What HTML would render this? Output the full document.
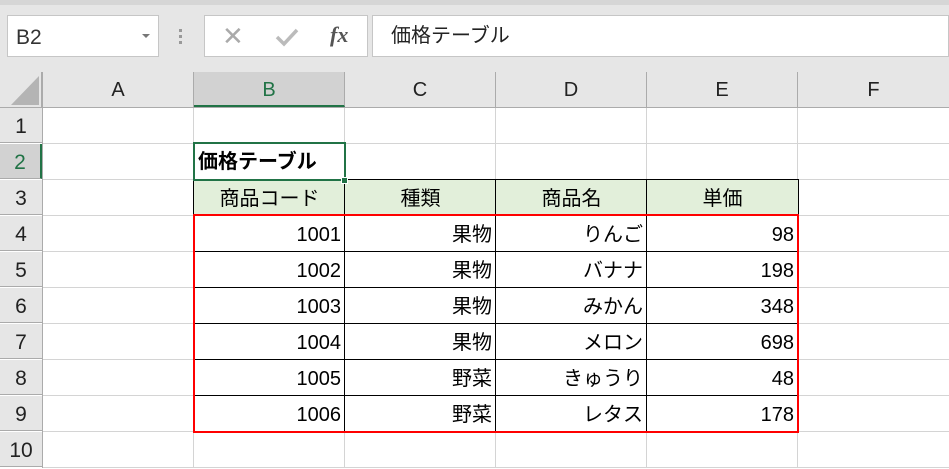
<!DOCTYPE html><html><head><meta charset="utf-8"><style>
*{margin:0;padding:0;box-sizing:border-box}
body{width:949px;height:468px;overflow:hidden;background:#fff;position:relative;font-family:"Liberation Sans","Noto Sans CJK JP",sans-serif}
.a{position:absolute}
.vl{position:absolute;width:1px;background:#d4d4d4;top:108px;height:360px}
.hl{position:absolute;height:1px;background:#d4d4d4;left:43px;width:906px}
.rh{position:absolute;left:0;width:42px;height:35px;background:#e6e6e6;font-size:21px;color:#222;text-align:center;line-height:37px;border-bottom:1px solid #ababab}
.ch{position:absolute;top:72px;height:35px;background:#e6e6e6;font-size:20px;color:#222;text-align:center;line-height:36px;border-right:1px solid #ababab}
.c{position:absolute;font-size:20px;line-height:38px;height:36px;color:#000;padding:0 3px;white-space:nowrap}
.r{text-align:right}.m{text-align:center}
</style></head><body>
<div class="a" style="left:0;top:0;width:949px;height:72px;background:#e6e6e6"></div>
<div class="a" style="left:0;top:0;width:949px;height:5px;background:#d6d6d6"></div>
<div class="a" style="left:7px;top:15px;width:152px;height:42px;background:#fff;border:1px solid #c6c6c6;font-size:21px;line-height:44px;padding-left:8px;color:#333">B2</div>
<div class="a" style="left:142px;top:34px;width:0;height:0;border-left:4px solid transparent;border-right:4px solid transparent;border-top:4px solid #777"></div>
<div class="a" style="left:179px;top:29px;width:3px;height:3px;background:#999;box-shadow:0 6px 0 #999,0 12px 0 #999"></div>
<div class="a" style="left:204px;top:15px;width:164px;height:42px;background:#fff;border:1px solid #c6c6c6"></div>
<div class="a" style="left:222px;top:23px;font-size:26px;color:#aaa;line-height:26px">✕</div>
<svg class="a" style="left:275px;top:27px" width="24" height="20"><path d="M2 10 L9 17 L22 3" stroke="#bbb" stroke-width="3.5" fill="none"/></svg>
<div class="a" style="left:330px;top:22px;font-size:22px;font-family:'Liberation Serif',serif;font-style:italic;font-weight:bold;color:#555">fx</div>
<div class="a" style="left:372px;top:15px;width:577px;height:42px;background:#fff;border:1px solid #c6c6c6;font-size:20px;line-height:40px;padding-left:18px;color:#222">価格テーブル</div>
<div class="a" style="left:0;top:72px;width:42px;height:36px;background:#e6e6e6;border-right:1px solid #ababab;border-bottom:1px solid #ababab"></div>
<svg class="a" style="left:10px;top:76px" width="30" height="30"><path d="M29 0 L29 29 L1 29 Z" fill="#b4b4b4"/></svg>
<div class="a" style="left:43px;top:107px;width:906px;height:1px;background:#ababab"></div>
<div class="ch" style="left:43px;width:151px">A</div>
<div class="ch" style="left:194px;width:151px;background:#d2d2d2;color:#217346;border-bottom:2px solid #217346">B</div>
<div class="ch" style="left:345px;width:151px">C</div>
<div class="ch" style="left:496px;width:151px">D</div>
<div class="ch" style="left:647px;width:151px">E</div>
<div class="ch" style="left:798px;width:151px;border-right:none">F</div>
<div class="a" style="left:42px;top:72px;width:1px;height:396px;background:#ababab"></div>
<div class="rh" style="top:108px">1</div>
<div class="rh" style="top:144px;background:#d2d2d2;color:#217346;border-right:2px solid #217346">2</div>
<div class="rh" style="top:180px">3</div><div class="rh" style="top:216px">4</div><div class="rh" style="top:252px">5</div><div class="rh" style="top:288px">6</div><div class="rh" style="top:324px">7</div><div class="rh" style="top:360px">8</div><div class="rh" style="top:396px">9</div><div class="rh" style="top:432px">10</div>
<div class="vl" style="left:193px"></div><div class="vl" style="left:344px"></div><div class="vl" style="left:495px"></div><div class="vl" style="left:646px"></div><div class="vl" style="left:797px"></div>
<div class="hl" style="top:143px"></div><div class="hl" style="top:179px"></div><div class="hl" style="top:215px"></div><div class="hl" style="top:251px"></div><div class="hl" style="top:287px"></div><div class="hl" style="top:323px"></div><div class="hl" style="top:359px"></div><div class="hl" style="top:395px"></div><div class="hl" style="top:431px"></div><div class="hl" style="top:467px"></div>
<div class="a" style="left:194px;top:180px;width:604px;height:36px;background:#e2efda"></div>
<div class="a" style="left:193px;top:179px;width:606px;height:253px;border:1px solid #000"></div>
<div class="a" style="left:344px;top:179px;width:1px;height:253px;background:#000"></div>
<div class="a" style="left:495px;top:179px;width:1px;height:253px;background:#000"></div>
<div class="a" style="left:646px;top:179px;width:1px;height:253px;background:#000"></div>
<div class="a" style="left:193px;top:251px;width:606px;height:1px;background:#000"></div>
<div class="a" style="left:193px;top:287px;width:606px;height:1px;background:#000"></div>
<div class="a" style="left:193px;top:323px;width:606px;height:1px;background:#000"></div>
<div class="a" style="left:193px;top:359px;width:606px;height:1px;background:#000"></div>
<div class="a" style="left:193px;top:395px;width:606px;height:1px;background:#000"></div>
<div class="a" style="left:193px;top:214px;width:606px;height:219px;border:2px solid #f00"></div>
<div class="a" style="left:193px;top:142px;width:153px;height:39px;border:2px solid #217346"></div>
<div class="a" style="left:341px;top:177px;width:7px;height:7px;background:#217346;border:1px solid #fff"></div>
<div class="c" style="left:195px;top:143px;font-weight:bold">価格テーブル</div>
<div class="c m" style="left:194px;top:180px;width:151px">商品コード</div>
<div class="c m" style="left:345px;top:180px;width:151px">種類</div>
<div class="c m" style="left:496px;top:180px;width:151px">商品名</div>
<div class="c m" style="left:647px;top:180px;width:151px">単価</div>
<div class="c r" style="left:194px;top:216px;width:150px">1001</div><div class="c r" style="left:345px;top:216px;width:150px">果物</div><div class="c r" style="left:496px;top:216px;width:150px">りんご</div><div class="c r" style="left:647px;top:216px;width:150px">98</div>
<div class="c r" style="left:194px;top:252px;width:150px">1002</div><div class="c r" style="left:345px;top:252px;width:150px">果物</div><div class="c r" style="left:496px;top:252px;width:150px">バナナ</div><div class="c r" style="left:647px;top:252px;width:150px">198</div>
<div class="c r" style="left:194px;top:288px;width:150px">1003</div><div class="c r" style="left:345px;top:288px;width:150px">果物</div><div class="c r" style="left:496px;top:288px;width:150px">みかん</div><div class="c r" style="left:647px;top:288px;width:150px">348</div>
<div class="c r" style="left:194px;top:324px;width:150px">1004</div><div class="c r" style="left:345px;top:324px;width:150px">果物</div><div class="c r" style="left:496px;top:324px;width:150px">メロン</div><div class="c r" style="left:647px;top:324px;width:150px">698</div>
<div class="c r" style="left:194px;top:360px;width:150px">1005</div><div class="c r" style="left:345px;top:360px;width:150px">野菜</div><div class="c r" style="left:496px;top:360px;width:150px">きゅうり</div><div class="c r" style="left:647px;top:360px;width:150px">48</div>
<div class="c r" style="left:194px;top:396px;width:150px">1006</div><div class="c r" style="left:345px;top:396px;width:150px">野菜</div><div class="c r" style="left:496px;top:396px;width:150px">レタス</div><div class="c r" style="left:647px;top:396px;width:150px">178</div>
</body></html>
